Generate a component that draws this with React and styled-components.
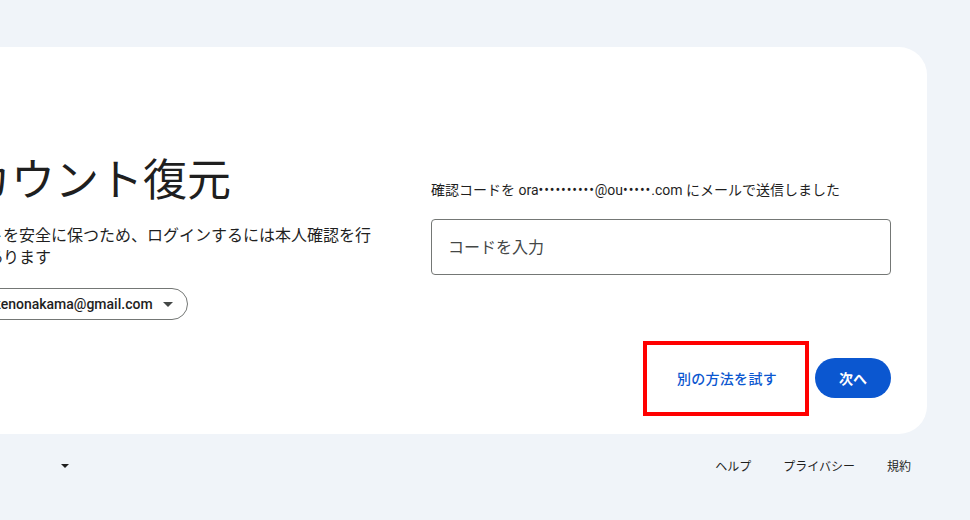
import React from 'react';
import styled, { createGlobalStyle } from 'styled-components';

const GlobalStyle = createGlobalStyle`
  html, body {
    margin: 0;
    padding: 0;
    background: #f0f4f9;
    overflow: hidden;
  }
  body {
    font-family: Roboto, "Noto Sans CJK JP", sans-serif;
    color: #1f1f1f;
  }
  * {
    box-sizing: border-box;
  }
`;

const Page = styled.div`
  display: flex;
  justify-content: flex-end;
  padding: 47px 43px 0 0;
  height: 520px;
`;

const Column = styled.div`
  width: 1040px;
  flex-shrink: 0;
  display: flex;
  flex-direction: column;
`;

const Card = styled.main`
  background: #fff;
  border-radius: 28px;
  padding: 36px;
  display: grid;
  grid-template-columns: 484px 484px;
`;

const LeftPane = styled.section`
  padding-right: 24px;
`;

const RightPane = styled.section`
  padding: 97px 0 0 24px;
`;

const Logo = styled.svg`
  display: block;
  width: 48px;
  height: 48px;
`;

const Title = styled.h1`
  margin: 20px 0 0;
  font-family: "Noto Sans CJK JP", sans-serif;
  font-size: 44px;
  line-height: 52px;
  font-weight: 400;
  color: #1f1f1f;
`;

const Description = styled.p`
  margin: 20px 0 0;
  font-family: "Noto Sans CJK JP", sans-serif;
  font-size: 16px;
  line-height: 22px;
  color: #1f1f1f;
`;

const AccountChip = styled.button`
  margin-top: 21px;
  height: 32px;
  display: inline-flex;
  align-items: center;
  padding: 0 14px 0 6px;
  border: 1px solid #747775;
  border-radius: 16px;
  background: #fff;
  font-family: Roboto, "Noto Sans CJK JP", sans-serif;
  font-size: 14px;
  font-weight: 500;
  color: #1f1f1f;
  cursor: pointer;
`;

const Avatar = styled.svg`
  width: 24px;
  height: 24px;
  margin-right: 12px;
  flex-shrink: 0;
`;

const Caret = styled.span`
  display: block;
  width: 0;
  height: 0;
  margin-left: ${({ $gap }) => $gap}px;
  border-left: ${({ $size }) => $size}px solid transparent;
  border-right: ${({ $size }) => $size}px solid transparent;
  border-top: ${({ $size }) => $size}px solid ${({ $color }) => $color};
`;

const SentNote = styled.div`
  font-size: 14px;
  line-height: 20px;
  color: #1f1f1f;
`;

const Mask = styled.span`
  letter-spacing: 0.9px;
`;

const CodeField = styled.input`
  display: block;
  width: 100%;
  height: 56px;
  margin-top: 19px;
  padding: 0 16px 3px;
  border: 1px solid #747775;
  border-radius: 4px;
  font-family: "Noto Sans CJK JP", sans-serif;
  font-size: 16px;
  color: #1f1f1f;
  outline: none;

  &::placeholder {
    color: #444746;
  }
`;

const Actions = styled.div`
  grid-column: 1 / span 2;
  display: flex;
  justify-content: flex-end;
  align-items: center;
  margin-top: 38px;
`;

const TextButton = styled.button`
  position: relative;
  height: 40px;
  padding: 0 12px;
  margin-right: 26px;
  border: none;
  border-radius: 20px;
  background: transparent;
  font-family: "Noto Sans CJK JP", sans-serif;
  font-size: 14px;
  font-weight: 500;
  letter-spacing: 0.3px;
  color: #0b57d0;
  cursor: pointer;

  &::after {
    content: '';
    position: absolute;
    inset: -17px -20px -18px -22px;
    border: 4px solid #ff0000;
    pointer-events: none;
  }
`;

const FilledButton = styled.button`
  height: 40px;
  width: 76px;
  border: none;
  border-radius: 20px;
  background: #0b57d0;
  font-family: "Noto Sans CJK JP", sans-serif;
  font-size: 14px;
  font-weight: 700;
  color: #fff;
  cursor: pointer;
`;

const Footer = styled.footer`
  display: flex;
  justify-content: space-between;
  align-items: center;
  margin-top: 16px;
`;

const LanguageSelect = styled.div`
  width: 190px;
  height: 32px;
  display: flex;
  align-items: center;
  padding: 0 8px 0 16px;
  font-family: "Noto Sans CJK JP", sans-serif;
  font-size: 12px;
  color: #1f1f1f;

  & > span:first-child {
    margin-right: auto;
  }
`;

const FooterLinks = styled.nav`
  display: flex;
`;

const FooterLink = styled.a`
  padding: 8px 16px;
  font-family: "Noto Sans CJK JP", sans-serif;
  font-size: 12px;
  line-height: 16px;
  color: #1f1f1f;
  text-decoration: none;
`;

const GoogleLogo = () => (
  <Logo viewBox="0 0 48 48" aria-label="Google">
    <path fill="#EA4335" d="M24 9.5c3.54 0 6.71 1.22 9.21 3.6l6.85-6.85C35.9 2.38 30.47 0 24 0 14.62 0 6.51 5.38 2.56 13.22l7.98 6.19C12.43 13.72 17.74 9.5 24 9.5z" />
    <path fill="#4285F4" d="M46.98 24.55c0-1.57-.15-3.09-.38-4.55H24v9.02h12.94c-.58 2.96-2.26 5.48-4.78 7.18l7.73 6c4.51-4.18 7.09-10.36 7.09-17.65z" />
    <path fill="#FBBC05" d="M10.53 28.59c-.48-1.45-.76-2.99-.76-4.59s.27-3.14.76-4.59l-7.98-6.19C.92 16.46 0 20.12 0 24c0 3.88.92 7.54 2.56 10.78l7.97-6.19z" />
    <path fill="#34A853" d="M24 48c6.48 0 11.93-2.13 15.89-5.81l-7.73-6c-2.15 1.45-4.92 2.3-8.16 2.3-6.26 0-11.57-4.22-13.47-9.91l-7.98 6.19C6.51 42.62 14.62 48 24 48z" />
  </Logo>
);

const AccountIcon = () => (
  <Avatar viewBox="0 0 24 24">
    <circle cx="12" cy="12" r="12" fill="#5f6368" />
    <circle cx="12" cy="9.5" r="4" fill="#fff" />
    <path d="M4.5 19c1.6-2.6 4.3-4 7.5-4s5.9 1.4 7.5 4" fill="#fff" />
  </Avatar>
);

export default function App() {
  return (
    <>
      <GlobalStyle />
      <Page>
        <Column>
          <Card>
            <LeftPane>
              <GoogleLogo />
              <Title>アカウント復元</Title>
              <Description>
                アカウントを安全に保つため、ログインするには本人確認を行う必要があります
              </Description>
              <AccountChip type="button">
                <AccountIcon />
                <span>hatakenonakama@gmail.com</span>
                <Caret $gap={10} $size={5} $color="#444746" />
              </AccountChip>
            </LeftPane>
            <RightPane>
              <SentNote>
                確認コードを ora<Mask>••••••••••</Mask>@ou<Mask>•••••</Mask>.com にメールで送信しました
              </SentNote>
              <CodeField type="text" placeholder="コードを入力" />
            </RightPane>
            <Actions>
              <TextButton type="button">別の方法を試す</TextButton>
              <FilledButton type="button">次へ</FilledButton>
            </Actions>
          </Card>
          <Footer>
            <LanguageSelect>
              <span>日本語</span>
              <Caret $gap={0} $size={4} $color="#1f1f1f" />
            </LanguageSelect>
            <FooterLinks>
              <FooterLink href="#">ヘルプ</FooterLink>
              <FooterLink href="#">プライバシー</FooterLink>
              <FooterLink href="#">規約</FooterLink>
            </FooterLinks>
          </Footer>
        </Column>
      </Page>
    </>
  );
}
